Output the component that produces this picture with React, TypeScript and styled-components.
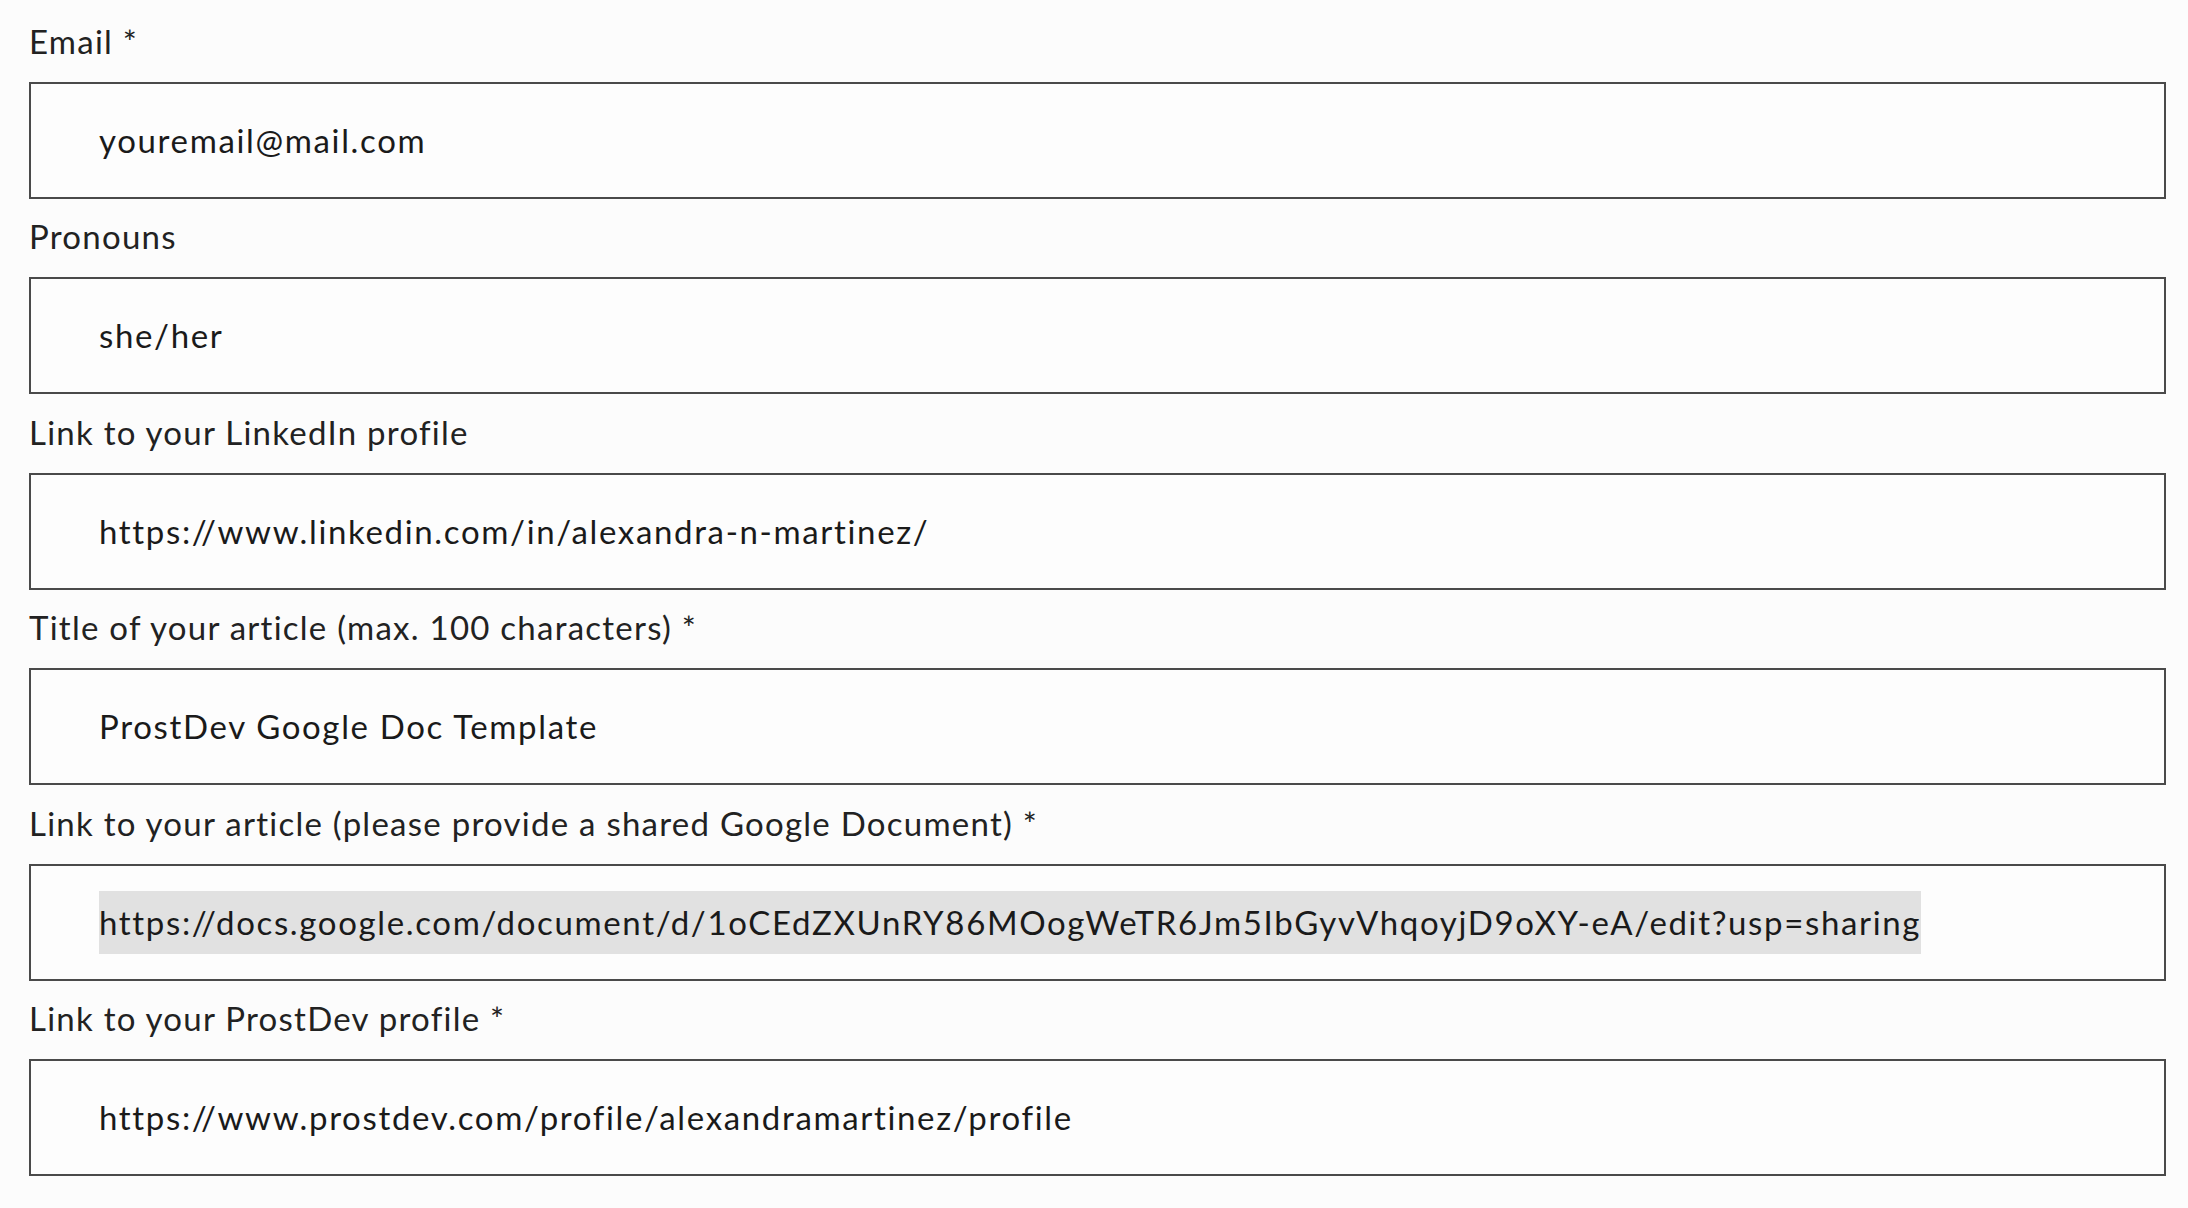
import styled, { createGlobalStyle } from "styled-components"

const GlobalStyle = createGlobalStyle`
    html, body {
        margin: 0;
        padding: 0;
        background-color: #fcfcfc;
    }
    body {
        font-family: Lato, "Open Sans", sans-serif;
        color: #1e1e1e;
    }
`

const Form = styled.form`
    width: 2137px;
    padding: 21px 0 0 29px;
    display: flex;
    flex-direction: column;
    gap: 17.4px;
`

const Field = styled.div`
    display: flex;
    flex-direction: column;
`

const Label = styled.label`
    font-size: 33px;
    line-height: 40px;
    height: 40px;
    margin-bottom: 21px;
    color: #222;
    letter-spacing: 1.25px;
    white-space: nowrap;
`

const Box = styled.div`
    box-sizing: border-box;
    height: 117px;
    border: 2px solid #4a4a4a;
    background-color: #fdfdfd;
    display: flex;
    align-items: center;
    padding-left: 68px;
`

const Value = styled.span<{ $selected?: boolean }>`
    font-size: 33px;
    line-height: 63px;
    color: #1a1a1a;
    letter-spacing: 1.65px;
    white-space: nowrap;
    background-color: ${(p) => (p.$selected ? "#e1e1e1" : "transparent")};
`

const fields = [
    { id: "email", label: "Email *", value: "youremail@mail.com" },
    { id: "pronouns", label: "Pronouns", value: "she/her" },
    { id: "linkedin", label: "Link to your LinkedIn profile", value: "https://www.linkedin.com/in/alexandra-n-martinez/" },
    { id: "title", label: "Title of your article (max. 100 characters) *", value: "ProstDev Google Doc Template" },
    {
        id: "article",
        label: "Link to your article (please provide a shared Google Document) *",
        value: "https://docs.google.com/document/d/1oCEdZXUnRY86MOogWeTR6Jm5IbGyvVhqoyjD9oXY-eA/edit?usp=sharing",
        selected: true
    },
    { id: "profile", label: "Link to your ProstDev profile *", value: "https://www.prostdev.com/profile/alexandramartinez/profile" }
]

const App = () => {
    return (
        <>
            <GlobalStyle />
            <Form onSubmit={(event) => event.preventDefault()}>
                {fields.map((field) => (
                    <Field key={field.id}>
                        <Label htmlFor={field.id}>{field.label}</Label>
                        <Box id={field.id}>
                            <Value $selected={field.selected}>{field.value}</Value>
                        </Box>
                    </Field>
                ))}
            </Form>
        </>
    )
}

export default App
